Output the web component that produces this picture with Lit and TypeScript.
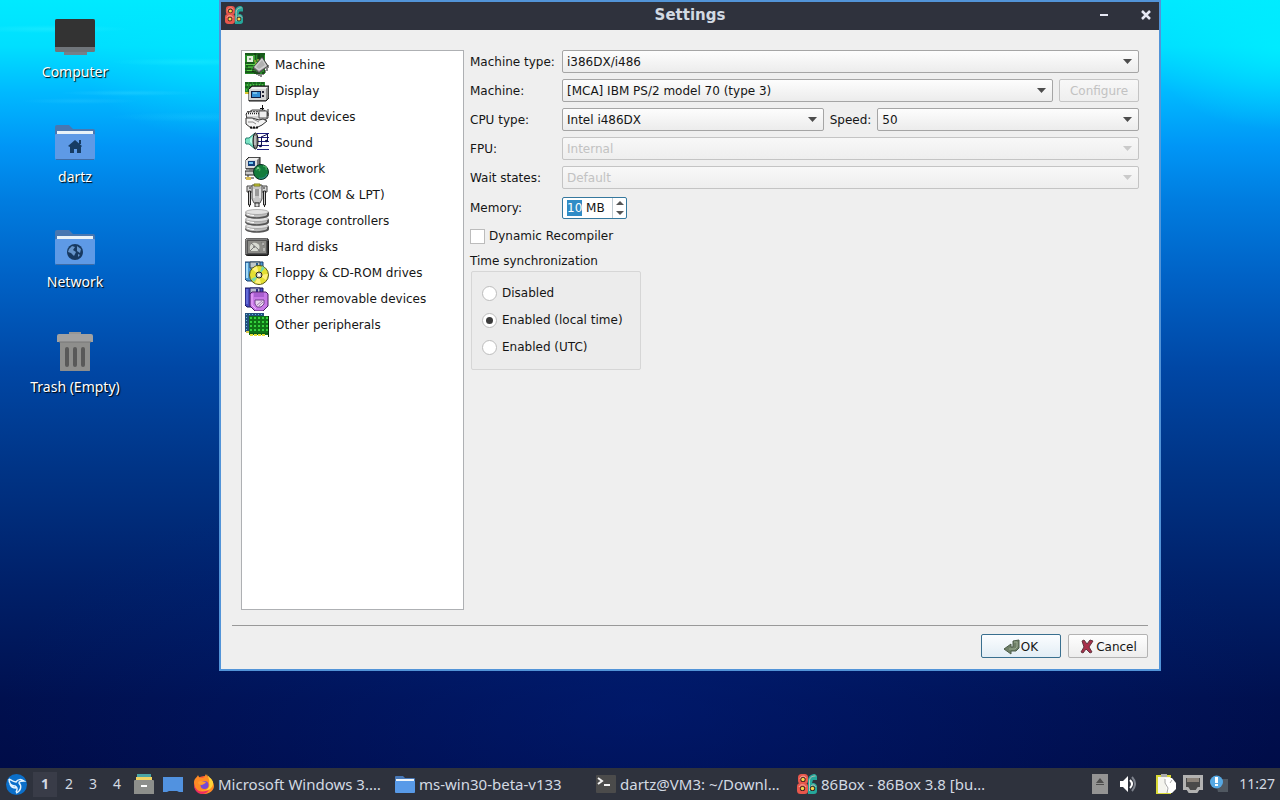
import {LitElement, html, svg, css, PropertyValues, TemplateResult, SVGTemplateResult} from 'lit';
import {customElement, property, state, query} from 'lit/decorators.js';

const grid = (xs: number[], ys: number[], size: number, fill: string) =>
  ys.map((y) =>
    xs.map((x) => svg`<rect x=${x} y=${y} width=${size} height=${size} fill=${fill} />`)
  );

const boxLogo = svg`
  <g fill="#e8574c">
    <rect x="1" y="0" width="10" height="10" rx="3.500" />
    <rect x="0" y="9" width="11" height="11" rx="3.500" />
  </g>
  <path d="M11 20V7c0-5 3-7 7-7l2 2v4h-4l-1 3h2q3 1 3 4v4q0 3-3 3z" fill="#25a79b" />
  <path d="M3 5c0-3 5-4 6-1M2 13c1-3 6-3 7 0M12.500 17V7c0-4 3-5 6-5M14 12c2-2 4-1 5 1" fill="none" stroke="#f4c4b6" stroke-width=".8" />
  <g fill="#3a2420"><circle cx="6" cy="5.500" r="2.600" /><circle cx="5.500" cy="14.500" r="2.600" /><circle cx="15.500" cy="14.500" r="2.600" /></g>
  <g fill="#f6d54e"><circle cx="6" cy="5.500" r="1.700" /><circle cx="5.500" cy="14.500" r="1.700" /><circle cx="15.500" cy="14.500" r="1.700" /></g>`;

const categoryIcons: Record<string, SVGTemplateResult | SVGTemplateResult[]> = {
  machine: svg`
    <rect width="20" height="21" fill="#268c26" />
    <path d="M0 1h20M12 3h7M12 5h7M12 7h7M0 10h9M1 13h7M0 16h6M0 19h9M10 0v9M14 1v7" stroke="#0b2b10" fill="none" />
    <path d="M9 2v5M1 11.500h10M3 14h6M2 17.500h7" stroke="#61d24e" fill="none" />
    <rect x="2" y="3" width="6" height="6" fill="#e5efe0" /><rect x="4" y="5" width="2" height="2" fill="#77a377" />
    <path d="M10 10h4M9 8h2M12 7h2" stroke="#dfd44a" fill="none" />
    <path d="M8 16v3M10 18v3M12 19v3M14 20v3M16 21v3M18 19v3M20 17v3M22 15v3M23 12v3" stroke="#111" fill="none" />
    <path d="M8 15 17 4l6 9-9 7z" fill="#777" stroke="#444" />
    <path d="M9 14 17 5l5 8-8 5z" fill="#d0d0d0" /><path d="m11 14 6-7 3 5-6 4z" fill="#b0b0b0" />`,
  display: svg`
    <rect y="3" width="20" height="12" fill="#248b2a" />
    <path d="M0 4h20M0 8h20" stroke="#0d3c12" stroke-dasharray="3 1" fill="none" />
    <path d="M2 6h16M1 11h3" stroke="#7ce063" stroke-dasharray="1 2" fill="none" />
    <path d="M0 14h4" stroke="#d9c731" stroke-width="2" />
    <path d="m4 10 3-3h17v12l-3 3H4z" fill="#727272" stroke="#111" />
    <path d="m5 10 2-2h16l-2 2z" fill="#eee" />
    <path d="M4 10h17v11H4z" fill="#d5d5d5" /><path d="M21 10l2-2v10l-2 3z" fill="#8b8b8b" />
    <rect x="6" y="12" width="10" height="7" fill="#121c3e" /><rect x="7" y="13" width="8" height="5" fill="#358fd5" />
    <path d="M8 14h4" stroke="#b9efff" /><path d="M18 12v2M18 16v2" stroke="#223" stroke-width="2" />`,
  input: svg`
    <path d="m1 9 6-4h12l4 3v5l-9 5-12-4z" fill="#d4d4d4" stroke="#444" />
    <path d="M2 8h11v3H2z" fill="#f4f4f4" />
    <path d="M1 8.500h13" stroke="#222" stroke-width="1.500" stroke-dasharray="1 1" />
    <path d="M2 6.500h11" stroke="#555" stroke-dasharray="2 1" />
    <path d="M14 6h8v7h-8z" fill="#eee" stroke="#555" /><path d="M17.500 0v5M15 3.500h4" stroke="#111" /><path d="M23 4v7" stroke="#222" />
    <path d="M1 13h6l7 2 4-1 4 2-5 4-6 3H6l-5-4z" fill="#f4f4f4" stroke="#333" />
    <path d="M3 17h5l3 2M8 14l6 3" stroke="#888" fill="none" /><path d="M5 22.500h8" stroke="#111" stroke-width="2" stroke-dasharray="2 1" />`,
  sound: svg`
    <path d="M12 2.500h12M12 6.500h12M12 10.500h12M12 14.500h12M12 18.500h12" stroke="#202080" fill="none" />
    <path d="M16.500 6v9M22.500 3v7M16 6l7-3" stroke="#10104e" fill="none" />
    <ellipse cx="15.500" cy="15" rx="1.500" ry="1.300" fill="#10104e" /><ellipse cx="21.500" cy="10" rx="1.500" ry="1.300" fill="#10104e" />
    <path d="M10 2v16L4 13H1l-1-3 1-3h3z" fill="#79e2c3" stroke="#2a7f70" />
    <path d="M9 4v11l-4-4V8z" fill="#b9ffe8" />
    <ellipse cx="10.500" cy="10" rx="2.500" ry="8" fill="#888" stroke="#111" /><path d="M10 5v9" stroke="#eee" />`,
  network: svg`
    <path d="m1 3 3-3h11v10l-3 2H1z" fill="#777" stroke="#222" /><path d="m2 3 2-2h10l-2 2z" fill="#f1f1f1" /><path d="M1 3h11v8H1z" fill="#ddd" />
    <rect x="3" y="4" width="7" height="5" fill="#153d78" /><path d="M4 5h4v2H4z" fill="#70c6f0" />
    <path d="M0 14h12v4H0z" fill="#ccc" stroke="#222" /><path d="M4 12h5v2H4z" fill="#777" />
    <path d="M3 18v3H0m3 0h6m-6 0v2" stroke="#222" fill="none" /><rect x="1" y="20" width="5" height="3" fill="#d9bd53" />
    <circle cx="16" cy="15" r="7.500" fill="#137c3c" stroke="#092d22" />
    <path d="M11 13c3-4 5-1 3 1m4-5c3 0 4 2 3 4" fill="none" stroke="#42a85c" stroke-width="1.500" />
    <path d="M12 11h2" stroke="#bff2c1" /><path d="M14 21c4 1 7-1 8-4" stroke="#2d8895" fill="none" />`,
  ports: svg`
    <path d="M2 3h20v6H2z" fill="#d9d9d9" stroke="#444" />
    <path d="M3.500 8h2v14h-2zM18.500 8h2v14h-2z" fill="#ccc" stroke="#222" />
    <path d="M7 2h10v14l-2 4H9l-2-4z" fill="#c6c6c6" stroke="#555" />
    <path d="M9 1h6v2H9z" fill="#d8d839" stroke="#777820" /><path d="M9 6v9M15 6v9" stroke="#fff" />
    <path d="M10 6h4v7h-4z" fill="#999" /><path d="M10 20h4v4h-4z" fill="#ddd" stroke="#333" />
    <path d="M4.500 22v2M19.500 22v2M4 5h2M18 5h2" stroke="#222" />`,
  storage: [16, 9, 2].map((y) => svg`
    <path d=${`M0 ${y + 1}v3c0 5 24 5 24 0v-3z`} fill="#555" />
    <path d=${`M0 ${y + 1}v2c2 4 18 4 22 1v-3z`} fill="#bcbcbc" />
    <ellipse cx="12" cy=${y + 1} rx="11.500" ry="2.500" fill="#e2e2e2" stroke="#999" stroke-width=".7" />
    <path d=${`M2 ${y + 3}q3 1.500 7 1.500`} stroke="#fff" fill="none" />`),
  disk: svg`
    <rect x=".5" y="3.500" width="23" height="17" rx="2" fill="#555" stroke="#222" />
    <path d="M1 19V5l1-1h20" stroke="#aaa" fill="none" />
    <path d="M3 6h18v12H3z" fill="#8c8c88" />
    <path d="M5 14c-1-5 4-8 8-5 3 2 1 7-1 7H5z" fill="#d8dbd3" />
    <path d="m6 8 7 6 2 3m1-10 3 4M5 16l5-5" stroke="#777" fill="none" /><circle cx="9" cy="12" r="1" fill="#777" />
    <path d="M18 8v2M19 13v3" stroke="#ddd" /><path d="M2 20h21V6" stroke="#151515" fill="none" />`,
  floppy: svg`
    <path d="M0 1h18v19H2l-2-2z" fill="#4e99d1" stroke="#173e70" /><path d="M2 2v15" stroke="#a2daf6" stroke-width="2" />
    <path d="M5 1h10v6H5z" fill="#bfc8cc" stroke="#345" /><path d="M11 2h2v4h-2z" fill="#235b8c" />
    <circle cx="14" cy="14" r="9.500" fill="#e4df32" stroke="#585618" />
    <path d="M14 14 7 8l5-3zM14 14l9-1-2 6zM14 14l-4 8 6 1z" fill="#fff27c" />
    <path d="M14 14 17 5l3 2zM14 14l-8 4 3 3z" fill="#78d9a8" />
    <circle cx="14" cy="14" r="3" fill="#d3d1be" stroke="#222" /><rect x="13" y="13" width="2" height="2" fill="#fff" />`,
  removable: svg`
    <path d="M0 1h18v19H2l-2-2z" fill="#4548bd" stroke="#14145c" /><path d="M2 2v15" stroke="#8590f4" />
    <path d="M5 1h10v6H5z" fill="#b9bbd1" stroke="#226" /><path d="M11 2h2v4h-2z" fill="#2b2f87" />
    <path d="M7 5h14l2 2v12l-5 5h-8l-5-5V7z" fill="#c879e7" stroke="#461b62" />
    <path d="M7 7v11l4 4" stroke="#f0b2ff" fill="none" /><path d="M9 6h10v4H9z" fill="#a95fd0" />
    <path d="M10 13h9v4l-3 3h-4l-2-3z" fill="#e9d7ef" stroke="#71428a" /><path d="m12 18 5-4m-3 5 4-4" stroke="#a684b2" />`,
  peripherals: svg`
    <path d="M0 0h19v19H0z" fill="#244f7d" />${grid([1, 4, 7, 10, 13, 16], [1, 4, 7, 10, 13, 16], 1, '#67bfdc')}
    <path d="M1 19h4" stroke="#dbc84b" stroke-width="2" />
    <path d="M4 3h20v19H4z" fill="#0f7216" />${grid([5, 9, 13, 17, 21], [4, 8, 12, 16], 2, '#35d13d')}
    <path d="M4 20.500h19" stroke="#0b5d12" fill="none" />
    <path d="M5 22h16" stroke="#e4db35" stroke-width="2" stroke-dasharray="3 1" /><path d="M23.500 3v21" stroke="#082d0b" />`,
};

const categories = [
  {id: 'machine', label: 'Machine'},
  {id: 'display', label: 'Display'},
  {id: 'input', label: 'Input devices'},
  {id: 'sound', label: 'Sound'},
  {id: 'network', label: 'Network'},
  {id: 'ports', label: 'Ports (COM & LPT)'},
  {id: 'storage', label: 'Storage controllers'},
  {id: 'disk', label: 'Hard disks'},
  {id: 'floppy', label: 'Floppy & CD-ROM drives'},
  {id: 'removable', label: 'Other removable devices'},
  {id: 'peripherals', label: 'Other peripherals'},
];

const folder = svg`
  <path d="M0 6q0-2 2-2h12l4 4h20q2 0 2 2v12H0z" fill="#4877b1" />
  <path d="M2 10h36v6H2z" fill="#e8f2f8" />
  <path d="M0 14q0-1 1-1h38q1 0 1 1v23q0 2-2 2H2q-2 0-2-2z" fill="#5e9ae6" />
  <path d="M1 38.500h38" stroke="#3e6ca6" />`;

const shortcuts = [
  {
    label: 'Computer',
    icon: svg`
      <path d="M9 35h23v4H9z" fill="#75808a" />
      <rect y="3" width="40" height="33" rx="1.500" fill="#70757a" />
      <path d="M0 5q0-2 2-2h36q2 0 2 2v26H0z" fill="#333" />`,
  },
  {
    label: 'dartz',
    icon: svg`${folder}<path d="m20 19 7 6-1 1v6h-4v-4h-3v4h-4v-6l-2-1zM24 19h2v4h-2z" fill="#163c63" />`,
  },
  {
    label: 'Network',
    icon: svg`${folder}<circle cx="20" cy="26" r="8" fill="#173960" />
      <path d="m14 23 3-3 3 1-2 3 3 2-2 4-3-3-3-1zM22 20l4 3-1 4-3-2zM23 28l2 1-2 2z" fill="#6694c9" />`,
  },
  {
    label: 'Trash (Empty)',
    icon: svg`
      <path d="M14 1h12v4H14z" fill="#969696" />
      <path d="M5 10h30v29q0 2-2 2H7q-2 0-2-2z" fill="#8e8e8c" />
      <path d="M2 5q0-2 2-2h32q2 0 2 2v6H2z" fill="#a1a1a1" /><path d="M4 11h32" stroke="#777" />
      <path d="M12 18v16M20 18v16M28 18v16" stroke="#595959" stroke-width="4" stroke-linecap="round" />`,
  },
];

const tasks = [
  {
    label: 'Microsoft Windows 3.…',
    icon: svg`
      <circle cx="10" cy="11" r="9" fill="#ff5a36" />
      <path d="M0 9C0 4 3 4 4 1c1 3 3 3 5 3 2-1 2-3 3-4 1 3 8 6 8 12 0 4-4 8-10 8C4 20 0 15 0 9z" fill="#ff8a25" />
      <path d="M13 0c1 4 3 5 2 9 2 5-4 9-8 7 8 2 13-3 12-8-1-4-5-5-6-8z" fill="#ffd43a" />
      <path d="M0 9c1 9 8 10 15 7-3 5-10 5-13 1C0 15 0 12 0 9z" fill="#ee2c62" />
      <circle cx="10.500" cy="11" r="4" fill="#7549d6" /><path d="M4 8c3-2 5 0 8 0-1 2-3 2-4 3-3 0-4-1-4-3z" fill="#ff9c2e" />`,
  },
  {
    label: 'ms-win30-beta-v133',
    icon: svg`
      <path d="M0 3q0-1 1-1h7l2 2h9q1 0 1 1v5H0z" fill="#4778b8" /><path d="M1 5h18v3H1z" fill="#edf4fa" />
      <path d="M0 7h20v11q0 1-1 1H1q-1 0-1-1z" fill="#589ae8" />`,
  },
  {
    label: 'dartz@VM3: ~/Downl…',
    icon: svg`
      <rect y="1" width="20" height="18" rx="1" fill="#4b4b4b" />
      <path d="m2 4 4 3-4 3M8 11h6" fill="none" stroke="#f4f4f4" stroke-width="2" />`,
  },
  {label: '86Box - 86Box 3.8 [bu…', icon: boxLogo},
];

const comboFields = [
  {id: 'fpu', label: 'FPU:', value: 'Internal'},
  {id: 'wait', label: 'Wait states:', value: 'Default'},
];

@customElement('combo-arrow')
export class ComboArrow extends LitElement {
  @property({type: Boolean, reflect: true}) dim = false;

  static override styles = css`
    :host {
      position: absolute;
      right: 7px;
      top: 9px;
      height: 5px;
      color: #4d4d4d;
      pointer-events: none;
    }

    :host([dim]) {
      color: #cacaca;
    }

    svg {
      display: block;
    }
  `;

  override render() {
    return html`<svg width="9" height="5" viewBox="0 0 9 5" aria-hidden="true">
      <path d="M0 0h9L4.500 5z" fill="currentColor" />
    </svg>`;
  }
}

@customElement('app-root')
export class AppRoot extends LitElement {
  @state() private workspace = 1;
  @state() private memory = '10 MB';
  @state() private timeSync = 'local';

  @query('#memory') private memoryInput!: HTMLInputElement;

  static override styles = css`
    :host {
      display: flex;
      flex-direction: column;
      min-height: 100vh;
      font: 12px/16px 'DejaVu Sans', sans-serif;
      color: #151515;
    }

    *,
    *::before {
      box-sizing: border-box;
    }

    svg {
      display: block;
      flex: none;
    }

    button,
    input,
    select {
      font: inherit;
      color: inherit;
      margin: 0;
    }

    .desktop {
      flex: 1;
      position: relative;
      min-height: 680px;
      background:
        radial-gradient(ellipse 80px 4px at 190px 62px, #2cf4ff55, transparent),
        radial-gradient(ellipse 70px 3px at 130px 93px, #4ee4ff44, transparent),
        radial-gradient(ellipse 60px 3px at 80px 101px, #39cfff44, transparent),
        radial-gradient(ellipse 90px 5px at 200px 117px, #25cfff44, transparent),
        radial-gradient(ellipse 80px 4px at 50px 29px, #50f6ff44, transparent),
        radial-gradient(ellipse 150px 80px at 230px 60px, #00eaff88, transparent),
        radial-gradient(ellipse 130px 80px at 100% 50px, #00f4ff99, transparent),
        radial-gradient(ellipse 50% 35% at 50% 92%, #00259066, transparent),
        linear-gradient(
          #00eaff 0,
          #00dfff 6%,
          #00b9ff 12%,
          #0096f6 19%,
          #007de0 26%,
          #0062c6 36%,
          #0047a5 48%,
          #003486 61%,
          #002069 76%,
          #00104f 91%,
          #000c48 100%
        );
    }

    .shortcuts {
      display: flex;
      flex-direction: column;
      align-items: center;
      gap: 39px;
      width: 150px;
      padding-top: 16px;
    }

    .shortcut {
      display: flex;
      flex-direction: column;
      align-items: center;
      gap: 6px;
      color: #fff;
      font: 14px/20px 'Noto Sans', sans-serif;
      text-decoration: none;
      text-shadow: 1px 1px 1px #000;
      white-space: nowrap;
    }

    .window {
      position: absolute;
      top: 0;
      left: 219px;
      right: 119px;
      border: 2px solid #5294d8;
      background: #efefef;
    }

    .titlebar {
      display: grid;
      grid-template-columns: 1fr auto 1fr;
      align-items: center;
      height: 28px;
      padding: 0 4px 2px;
      background: #2f323d;
      color: #d3dae3;
    }

    .titlebar h1 {
      margin: 0;
      font-size: 15px;
      line-height: 20px;
    }

    .window-buttons {
      display: flex;
      justify-content: flex-end;
      gap: 24px;
    }

    .window-buttons button {
      padding: 4px;
      border: 0;
      background: none;
    }

    .dialog {
      padding: 11px;
    }

    .panes {
      display: flex;
      gap: 6px;
      padding: 9px;
    }

    .categories {
      width: 223px;
      height: 560px;
      margin: 0;
      padding: 1px 0 0;
      border: 1px solid #aeb0b3;
      background: #fff;
      list-style: none;
    }

    .categories a {
      display: flex;
      align-items: center;
      gap: 6px;
      height: 26px;
      padding-left: 3px;
      color: inherit;
      text-decoration: none;
    }

    .form {
      flex: 1;
      display: flex;
      flex-direction: column;
    }

    .fields {
      display: grid;
      grid-template-columns: 86px 1fr;
      gap: 6px;
      align-items: center;
    }

    .fields label {
      white-space: nowrap;
    }

    .line {
      display: flex;
      align-items: center;
      gap: 6px;
    }

    .combo {
      position: relative;
      flex: 1;
      display: flex;
    }

    select {
      appearance: none;
      width: 100%;
      height: 23px;
      padding: 0 24px 0 4px;
      border: 1px solid #a5a5a5;
      border-radius: 2px;
      background: linear-gradient(#fdfdfd, #ececec);
    }

    select:disabled,
    .button:disabled {
      border-color: #c4c4c4;
      background: linear-gradient(#f8f8f8, #eee);
      color: #c2c2c2;
      opacity: 1;
    }

    .button {
      display: flex;
      align-items: center;
      justify-content: center;
      width: 80px;
      height: 24px;
      padding: 0;
      border: 1px solid #b3b3b3;
      border-radius: 2px;
      background: linear-gradient(#fefefe, #ededed);
    }

    .line .button {
      height: 23px;
    }

    .actions .button {
      gap: 1px;
      padding-top: 1px;
    }

    .button.default {
      border-color: #396f8f;
      background: linear-gradient(#fbfdff, #e2edf5);
    }

    .spin {
      display: flex;
      width: 65px;
      height: 22px;
      border: 1px solid #35789e;
      border-radius: 2px;
      background: #fff;
    }

    .fields .memory {
      margin-top: 2px;
    }

    .spin input {
      flex: 1;
      min-width: 0;
      padding: 0 0 0 4px;
      border: 0;
      outline: 0;
      background: none;
    }

    .spin input::selection {
      background: #308cc6;
      color: #fff;
    }

    .steps {
      display: flex;
      flex-direction: column;
      width: 14px;
      border-left: 1px solid #c0ccd3;
    }

    .steps button {
      flex: 1;
      display: grid;
      place-items: center;
      padding: 0;
      border: 0;
      background: none;
    }

    .check {
      display: flex;
      align-items: center;
      gap: 4px;
      margin-top: 9px;
    }

    input[type='checkbox'],
    input[type='radio'] {
      appearance: none;
      flex: none;
      width: 15px;
      height: 15px;
      border: 1px solid #bcbcbc;
      background: #fff;
    }

    input[type='radio'] {
      display: grid;
      place-items: center;
      border-radius: 50%;
    }

    input[type='radio']:checked::before {
      content: '';
      width: 7px;
      height: 7px;
      border-radius: 50%;
      background: #3c3c3c;
    }

    fieldset {
      margin: 9px 0 0;
      padding: 0;
      border: 0;
    }

    legend {
      padding: 0;
    }

    .group {
      display: flex;
      flex-direction: column;
      gap: 11px;
      width: 170px;
      height: 99px;
      margin: 2px 0 0 1px;
      padding: 13px 10px;
      border: 1px solid #d6d6d6;
      border-radius: 2px;
      background: #ececec;
    }

    .group label {
      display: flex;
      align-items: center;
      gap: 5px;
      white-space: nowrap;
    }

    .actions {
      display: flex;
      justify-content: flex-end;
      gap: 7px;
      margin-top: 6px;
      padding-top: 8px;
      border-top: 1px solid #999;
    }

    .taskbar {
      display: flex;
      align-items: center;
      height: 32px;
      padding: 0 5px 0 6px;
      background: #2e323d;
      color: #d3dae3;
      font: 14px/20px 'Noto Sans', sans-serif;
    }

    .taskbar button {
      display: flex;
      align-items: center;
      justify-content: center;
      padding: 0;
      border: 0;
      background: none;
      white-space: nowrap;
    }

    .workspaces {
      display: flex;
      margin: 0 5px 0 6px;
    }

    .workspaces button {
      width: 24px;
      height: 25px;
    }

    .workspaces .current {
      background: #393c48;
      font-weight: bold;
    }

    .launchers {
      display: flex;
      gap: 9px;
    }

    .tasks {
      flex: 1;
      display: flex;
      margin-left: 11px;
      font-size: 15px;
    }

    .tasks button {
      justify-content: flex-start;
      gap: 4px;
      width: 201px;
    }

    .tray {
      display: flex;
      align-items: center;
      gap: 7px;
    }

    .tray .volume {
      margin: 0 13px 0 5px;
    }

    .clock {
      margin-left: 4px;
    }
  `;

  protected override firstUpdated(_changed: PropertyValues): void {
    this.memoryInput.focus();
    this.memoryInput.setSelectionRange(0, 2);
  }

  private step(delta: number) {
    const size = Math.max(1, parseInt(this.memory, 10) + delta);
    this.memory = `${size} MB`;
  }

  private renderCombo(id: string, value: string, disabled = false): TemplateResult {
    return html`
      <div class="combo">
        <select id=${id} ?disabled=${disabled}>
          <option>${value}</option>
        </select>
        <combo-arrow ?dim=${disabled}></combo-arrow>
      </div>
    `;
  }

  private renderTimeOption(value: string, label: string): TemplateResult {
    return html`
      <label>
        <input
          type="radio"
          name="time"
          .checked=${this.timeSync === value}
          @change=${() => (this.timeSync = value)}
        />${label}
      </label>
    `;
  }

  private renderForm(): TemplateResult {
    return html`
      <form class="form" @submit=${(e: Event) => e.preventDefault()}>
        <div class="fields">
          <label for="type">Machine type:</label>
          ${this.renderCombo('type', 'i386DX/i486')}
          <label for="model">Machine:</label>
          <div class="line">
            ${this.renderCombo('model', '[MCA] IBM PS/2 model 70 (type 3)')}
            <button class="button" type="button" disabled>Configure</button>
          </div>
          <label for="cpu">CPU type:</label>
          <div class="line">
            ${this.renderCombo('cpu', 'Intel i486DX')}
            <label for="speed">Speed:</label>
            ${this.renderCombo('speed', '50')}
          </div>
          ${comboFields.map(
            (f) => html`
              <label for=${f.id}>${f.label}</label>
              ${this.renderCombo(f.id, f.value, true)}
            `
          )}
          <label class="memory" for="memory">Memory:</label>
          <div class="spin memory">
            <input id="memory" type="text" .value=${this.memory} />
            <div class="steps">
              <button type="button" aria-label="Increase" @click=${() => this.step(1)}>
                <svg width="8" height="4" viewBox="0 0 8 4"><path d="M0 4h8L4 0z" fill="#555" /></svg>
              </button>
              <button type="button" aria-label="Decrease" @click=${() => this.step(-1)}>
                <svg width="8" height="4" viewBox="0 0 8 4"><path d="M0 0h8L4 4z" fill="#555" /></svg>
              </button>
            </div>
          </div>
        </div>
        <label class="check"><input type="checkbox" />Dynamic Recompiler</label>
        <fieldset>
          <legend>Time synchronization</legend>
          <div class="group">
            ${this.renderTimeOption('disabled', 'Disabled')}
            ${this.renderTimeOption('local', 'Enabled (local time)')}
            ${this.renderTimeOption('utc', 'Enabled (UTC)')}
          </div>
        </fieldset>
      </form>
    `;
  }

  private renderWindow(): TemplateResult {
    return html`
      <section class="window" role="dialog" aria-labelledby="title">
        <header class="titlebar">
          <svg width="18" height="18" viewBox="0 0 20 20">${boxLogo}</svg>
          <h1 id="title">Settings</h1>
          <div class="window-buttons">
            <button aria-label="Minimize">
              <svg width="10" height="10" viewBox="0 0 10 10"><path d="M1 5h8" stroke="#e6e8f4" stroke-width="2" /></svg>
            </button>
            <button aria-label="Close">
              <svg width="10" height="10" viewBox="0 0 10 10">
                <path d="m1 1 8 8M9 1 1 9" stroke="#e6e8f4" stroke-width="2.500" />
              </svg>
            </button>
          </div>
        </header>
        <div class="dialog">
          <div class="panes">
            <ul class="categories">
              ${categories.map(
                (c) => html`
                  <li>
                    <a href="#${c.id}">
                      <svg width="24" height="24" viewBox="0 0 24 24">${categoryIcons[c.id]}</svg>
                      ${c.label}
                    </a>
                  </li>
                `
              )}
            </ul>
            ${this.renderForm()}
          </div>
          <footer class="actions">
            <button class="button default">
              <svg width="16" height="16" viewBox="0 0 16 16">
                <path d="M9 2l6-1v8l-3 3H7v3L0 10l7-5v3h2z" fill="#6f8068" stroke="#4c5d49" />
                <path d="M10 3h3v5l-2 2H5" fill="none" stroke="#9baa91" />
              </svg>OK
            </button>
            <button class="button">
              <svg width="16" height="16" viewBox="0 0 16 16">
                <path d="m3 2 2-1 3 4 3-4 3 1-4 6 3 5-2 1-4-4-3 4-2-1 3-5z" fill="#a92f4a" stroke="#61343e" />
              </svg>Cancel
            </button>
          </footer>
        </div>
      </section>
    `;
  }

  private renderTaskbar(): TemplateResult {
    return html`
      <nav class="taskbar">
        <button aria-label="Menu">
          <svg width="21" height="21" viewBox="0 0 21 21">
            <circle cx="10.500" cy="10.500" r="10.500" fill="#0b6fca" />
            <path
              d="M3 5c2 1 4 3 7 3 2-3 5-3 8-1-3 0-5 0-5 2 3 3 2 8-3 10M3 5c0 4 2 7 6 7 2 1 3 3 1 6M4 10c1 3 3 4 6 4"
              fill="none"
              stroke="#e5f4ff"
              stroke-width="1.500"
            />
          </svg>
        </button>
        <div class="workspaces">
          ${[1, 2, 3, 4].map(
            (n) => html`
              <button class=${n === this.workspace ? 'current' : ''} @click=${() => (this.workspace = n)}>
                ${n}
              </button>
            `
          )}
        </div>
        <div class="launchers">
          <button aria-label="File manager">
            <svg width="20" height="20" viewBox="0 0 20 20">
              <path d="M3 0h14v4H3z" fill="#4aa5a5" /><path d="M2 3h16v4H2z" fill="#f0d264" />
              <path d="M0 7q0-1 1-1h18q1 0 1 1v13H0z" fill="#8d8f8c" /><path d="M7 12h6" stroke="#fff" stroke-width="2" />
            </svg>
          </button>
          <button aria-label="Show desktop">
            <svg width="20" height="20" viewBox="0 0 20 20"><path d="M0 3h20v15h-4l-2-1H6l-2 1H0z" fill="#5192e0" /></svg>
          </button>
        </div>
        <div class="tasks">
          ${tasks.map(
            (t) => html`<button><svg width="20" height="20" viewBox="0 0 20 20">${t.icon}</svg>${t.label}</button>`
          )}
        </div>
        <div class="tray">
          <button aria-label="Removable media">
            <svg width="16" height="20" viewBox="0 0 16 20">
              <path d="M0 0h16v20H0z" fill="#949494" /><path d="m4 9 4-5 4 5zM4 10h8v1H4z" fill="#4d4d4d" />
            </svg>
          </button>
          <button class="volume" aria-label="Volume">
            <svg width="16" height="16" viewBox="0 0 16 16">
              <path d="M0 5h3l5-5v16l-5-5H0z" fill="#fff" />
              <path d="M10 4q4 4 0 8" stroke="#fff" stroke-width="2" fill="none" />
              <path d="M12 1q6 7 0 14" stroke="#7d828c" stroke-width="2" fill="none" />
            </svg>
          </button>
          <button aria-label="Clipboard">
            <svg width="20" height="20" viewBox="0 0 20 20">
              <path d="M0 1h15v19H0z" fill="#d9d936" /><path d="M2 3h12v16H2z" fill="#f4f4ee" />
              <path d="M5 0h6v3H5z" fill="#aaa" /><path d="M9 4h7l4 5v6l-4 4h-5z" fill="#fff" /><path d="M9 5v4l3 5-1 5M14 9l2-3" stroke="#aaa" fill="none" />
            </svg>
          </button>
          <button aria-label="Wired connection">
            <svg width="20" height="18" viewBox="0 0 20 18">
              <path d="M1.500 1.500h17v12h-3l-2 3h-7l-2-3h-3z" fill="#4a4a4a" stroke="#b2b2b2" stroke-width="3" />
              <path d="M5 3v4M7 3v4M9 3v4M11 3v4M13 3v4M15 3v4" stroke="#c9b9a7" />
            </svg>
          </button>
          <button aria-label="Notifications">
            <svg width="18" height="18" viewBox="0 0 18 18">
              <path d="M5 4h13v13H8z" fill="#505861" /><circle cx="6.500" cy="7" r="6.500" fill="#56a8e3" />
              <path d="M5 2h3v6H5zM5 9h3v2H5z" fill="#fff" />
            </svg>
          </button>
          <time class="clock">11:27</time>
        </div>
      </nav>
    `;
  }

  override render() {
    return html`
      <main class="desktop">
        <div class="shortcuts">
          ${shortcuts.map(
            (s) => html`
              <a class="shortcut" href="#">
                <svg width="40" height="40" viewBox="0 0 40 40">${s.icon}</svg>${s.label}
              </a>
            `
          )}
        </div>
        ${this.renderWindow()}
      </main>
      ${this.renderTaskbar()}
    `;
  }
}
